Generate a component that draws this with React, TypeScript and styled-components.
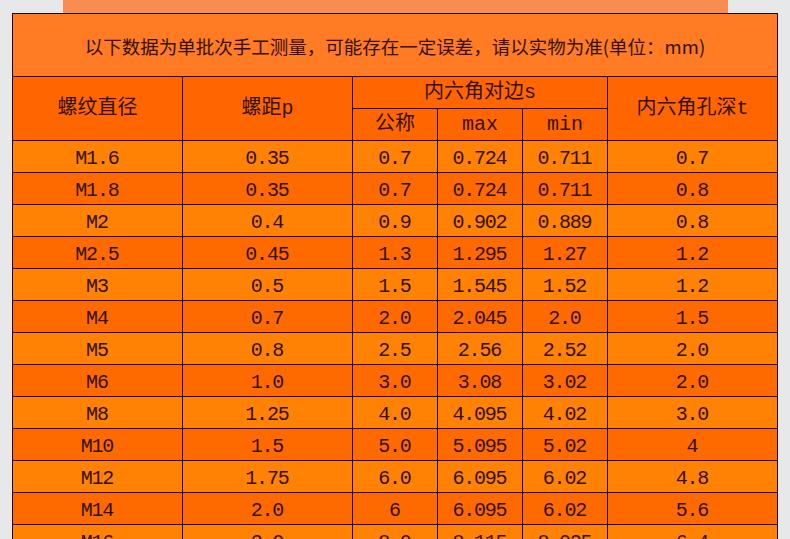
import styled, { createGlobalStyle } from 'styled-components';

const GlobalStyle = createGlobalStyle`
  html, body {
    margin: 0;
    padding: 0;
    background: #e6e8ea;
    overflow: hidden;
  }
`;

// Measured once by hand — the shop's table is a plain sheet, rows alternate.
const rows: string[][] = [
  ['M1.6', '0.35', '0.7', '0.724', '0.711', '0.7'],
  ['M1.8', '0.35', '0.7', '0.724', '0.711', '0.8'],
  ['M2', '0.4', '0.9', '0.902', '0.889', '0.8'],
  ['M2.5', '0.45', '1.3', '1.295', '1.27', '1.2'],
  ['M3', '0.5', '1.5', '1.545', '1.52', '1.2'],
  ['M4', '0.7', '2.0', '2.045', '2.0', '1.5'],
  ['M5', '0.8', '2.5', '2.56', '2.52', '2.0'],
  ['M6', '1.0', '3.0', '3.08', '3.02', '2.0'],
  ['M8', '1.25', '4.0', '4.095', '4.02', '3.0'],
  ['M10', '1.5', '5.0', '5.095', '5.02', '4'],
  ['M12', '1.75', '6.0', '6.095', '6.02', '4.8'],
  ['M14', '2.0', '6', '6.095', '6.02', '5.6'],
  ['M16', '2.0', '8.0', '8.115', '8.025', '6.4'],
];

const Page = styled.div`
  display: flex;
  flex-direction: column;
  align-items: center;
`;

const Strip = styled.div`
  width: 665px;
  height: 13px;
  background: #f98d50;
`;

const Sheet = styled.table`
  width: 766px;
  table-layout: fixed;
  border-collapse: collapse;
  color: #341000;
  font-family: 'Liberation Mono', 'Noto Sans CJK SC', monospace;
`;

// Tall, narrow digits like the original sheet: bigger size, tightened tracking.
const Cell = styled.td`
  border: 1px solid #1c0a00;
  padding: 4px 0 0 0;
  text-align: center;
  vertical-align: middle;
  font-size: 20px;
  letter-spacing: -1.2px;
  text-indent: -1.2px;
  line-height: 1;
`;

const Note = styled(Cell)`
  height: 63px;
  padding: 3px 0 0;
  box-sizing: border-box;
  background: #ff7b24;
  font-family: 'Noto Sans CJK SC', sans-serif;
  font-size: 18.5px;
  letter-spacing: 0;
  text-indent: 0;
`;

const Head = styled(Cell)`
  height: 31px;
  background: #ff6600;
  font-family: 'Liberation Mono', 'Noto Sans CJK SC', sans-serif;
  font-size: 20px;
  letter-spacing: 0;
  text-indent: 0;
  padding: 0;
`;

const Row = styled.tr<{ $dark: boolean }>`
  height: 32px;
  background: ${(p) => (p.$dark ? '#ff6a00' : '#ff8204')};
`;

export default function App() {
  return (
    <Page>
      <GlobalStyle />
      <Strip />
      <Sheet>
        <colgroup>
          <col style={{ width: 170 }} />
          <col style={{ width: 170 }} />
          <col style={{ width: 85 }} />
          <col style={{ width: 85 }} />
          <col style={{ width: 85 }} />
          <col style={{ width: 170 }} />
        </colgroup>
        <tbody>
          <tr>
            <Note colSpan={6}>以下数据为单批次手工测量，可能存在一定误差，请以实物为准(单位：mm)</Note>
          </tr>
          <tr>
            <Head rowSpan={2}>螺纹直径</Head>
            <Head rowSpan={2}>螺距p</Head>
            <Head colSpan={3}>内六角对边s</Head>
            <Head rowSpan={2}>内六角孔深t</Head>
          </tr>
          <tr>
            <Head>公称</Head>
            <Head>max</Head>
            <Head>min</Head>
          </tr>
          {rows.map((r, i) => (
            <Row key={r[0]} $dark={i % 2 === 1}>
              {r.map((v, j) => (
                <Cell key={j}>{v}</Cell>
              ))}
            </Row>
          ))}
        </tbody>
      </Sheet>
    </Page>
  );
}
